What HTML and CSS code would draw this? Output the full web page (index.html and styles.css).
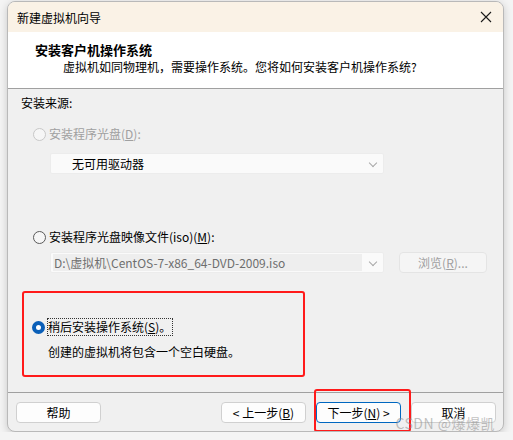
FILE: index.html
```html
<!DOCTYPE html>
<html lang="zh-CN">
<head>
    <meta charset="UTF-8">
    <meta name="viewport" content="width=device-width, initial-scale=1.0">
    <title>新建虚拟机向导</title>
    <link rel="stylesheet" href="styles.css">
</head>
<body>
    <div class="window">
        <div class="titlebar">
            <span class="title">新建虚拟机向导</span>
            <svg class="close" width="12" height="12" viewBox="0 0 12 12">
                <path d="M1 1 L11 11 M11 1 L1 11" stroke="#1a1a1a" stroke-width="1.1" fill="none"/>
            </svg>
        </div>
        <div class="header">
            <div class="header-title">安装客户机操作系统</div>
            <div class="header-sub">虚拟机如同物理机，需要操作系统。您将如何安装客户机操作系统?</div>
        </div>
        <div class="content">
            <div class="section-label">安装来源:</div>

            <div class="option option-disc disabled">
                <span class="radio"></span>
                <span>安装程序光盘(<u>D</u>):</span>
            </div>
            <div class="select select-disc">无可用驱动器<span class="chevron"></span></div>

            <div class="option option-iso">
                <span class="radio"></span>
                <span>安装程序光盘映像文件(iso)(<u>M</u>):</span>
            </div>
            <div class="iso-row">
                <div class="select select-iso"><span class="iso-text">D:\虚拟机\CentOS-7-x86_64-DVD-2009.iso</span><span class="chevron"></span></div>
                <button class="btn btn-disabled">浏览(<u>R</u>)...</button>
            </div>

            <div class="later-group">
                <div class="option option-later">
                    <span class="radio checked"></span>
                    <span class="focus">稍后安装操作系统(<u>S</u>)。</span>
                </div>
                <div class="later-desc">创建的虚拟机将包含一个空白硬盘。</div>
            </div>
        </div>
        <div class="footer">
            <button class="btn">帮助</button>
            <div class="spacer"></div>
            <button class="btn">&lt; 上一步(<u>B</u>)</button>
            <button class="btn btn-default">下一步(<u>N</u>) &gt;</button>
            <button class="btn">取消</button>
            <div class="mark-next"></div>
            <div class="watermark">CSDN @爆爆凯</div>
        </div>
    </div>
</body>
</html>
```

FILE: styles.css
```css
body {
    margin: 0;
    background-color: #f4f4f4;
    font-family: "Noto Sans CJK SC", "Noto Sans", sans-serif;
    font-size: 12px;
    color: #000;
}
.window {
    margin: 1px 0 0 7px;
    width: 497px;
    height: 431px;
    box-sizing: border-box;
    border: 1px solid #b9b9b9;
    border-radius: 8px;
    background-color: #f0f0f0;
    box-shadow: 0 2px 8px rgba(0,0,0,0.18);
    overflow: hidden;
    display: flex;
    flex-direction: column;
}
.titlebar {
    height: 30px;
    flex: none;
    background-color: #faf2e6;
    display: flex;
    align-items: center;
    padding: 0 10px 0 9px;
}
.title {
    flex: 1;
    line-height: 16px;
    margin-top: 1px;
}
.close {
    margin-right: 1px;
}
.header {
    height: 57px;
    flex: none;
    background-color: #fff;
    border-bottom: 1px solid #a0a0a0;
    box-sizing: border-box;
    padding: 9px 0 0 27px;
}
.header-title {
    font-size: 13px;
    font-weight: bold;
    line-height: 17px;
}
.header-sub {
    padding-left: 28px;
    line-height: 16px;
    margin-top: 1px;
}
.content {
    flex: 1;
    position: relative;
    padding: 6px 0 0 13px;
}
.section-label {
    line-height: 16px;
}
.option {
    display: flex;
    align-items: center;
    height: 18px;
    line-height: 18px;
}
.option-disc {
    margin-top: 14px;
}
.option-iso {
    margin-top: 54px;
}
.option.disabled {
    color: #a0a0a0;
}
.radio {
    width: 11px;
    height: 11px;
    border: 1px solid #5a5a5a;
    border-radius: 50%;
    background-color: #f6f6f6;
    margin: 0 3px 0 12px;
    flex: none;
}
.disabled .radio {
    border-color: #c8c8c8;
}
.radio.checked {
    width: 5px;
    height: 5px;
    border: 4px solid #0a5fb8;
    background-color: #fff;
}
.select {
    margin: 10px 0 0 29px;
    width: 334px;
    height: 21px;
    box-sizing: border-box;
    border: 1px solid #ececec;
    border-radius: 2px;
    background-color: #fafafa;
    display: flex;
    align-items: center;
    position: relative;
}
.select-disc {
    padding-left: 21px;
}
.select-iso {
    margin: 0;
    padding: 1px 21px 1px 2px;
}
.iso-text {
    flex: 1;
    height: 17px;
    line-height: 17px;
    background-color: #eeeeee;
    color: #6e6e6e;
    padding-left: 1px;
}
.chevron {
    position: absolute;
    right: 7px;
    top: 6px;
    width: 5px;
    height: 5px;
    border-right: 1px solid #a8a8a8;
    border-bottom: 1px solid #a8a8a8;
    transform: rotate(45deg);
}
.iso-row {
    display: flex;
    align-items: center;
    margin: 6px 0 0 29px;
    gap: 15px;
}
.btn {
    font-family: inherit;
    font-size: 12px;
    width: 85px;
    height: 21px;
    padding: 0;
    background-color: #fdfdfd;
    border: 1px solid #d0d0d0;
    border-radius: 4px;
    color: #000;
    line-height: 17px;
}
.btn-disabled {
    width: 88px;
    background-color: #f5f5f5;
    border-color: #e4e4e4;
    color: #a0a0a0;
}
.btn-default {
    border-color: #0067c0;
}
.later-group {
    margin: 18px 0 0 1px;
    width: 283px;
    height: 86px;
    box-sizing: border-box;
    border: 2px solid #ff1a1a;
    border-radius: 3px;
    padding-top: 25px;
}
.option-later .radio {
    margin-left: 8px;
}
.focus {
    outline: 1px dotted #333;
    line-height: 16px;
    padding-right: 1px;
}
.later-desc {
    margin: 8px 0 0 24px;
    line-height: 16px;
}
.footer {
    height: 39px;
    flex: none;
    border-top: 1px solid #a0a0a0;
    box-sizing: border-box;
    display: flex;
    align-items: flex-start;
    padding: 9px 0 0 8px;
    gap: 10px;
    position: relative;
}
.spacer {
    flex: 1;
}
.footer .btn:last-of-type {
    margin-right: 7px;
}
.mark-next {
    position: absolute;
    left: 306px;
    top: -4px;
    width: 97px;
    height: 43px;
    box-sizing: border-box;
    border: 2px solid #ff1a1a;
    border-radius: 3px;
}
.watermark {
    position: absolute;
    right: 8px;
    top: 23px;
    font-size: 14px;
    line-height: 15px;
    color: rgba(140,140,140,0.55);
    letter-spacing: 0.5px;
}
```
